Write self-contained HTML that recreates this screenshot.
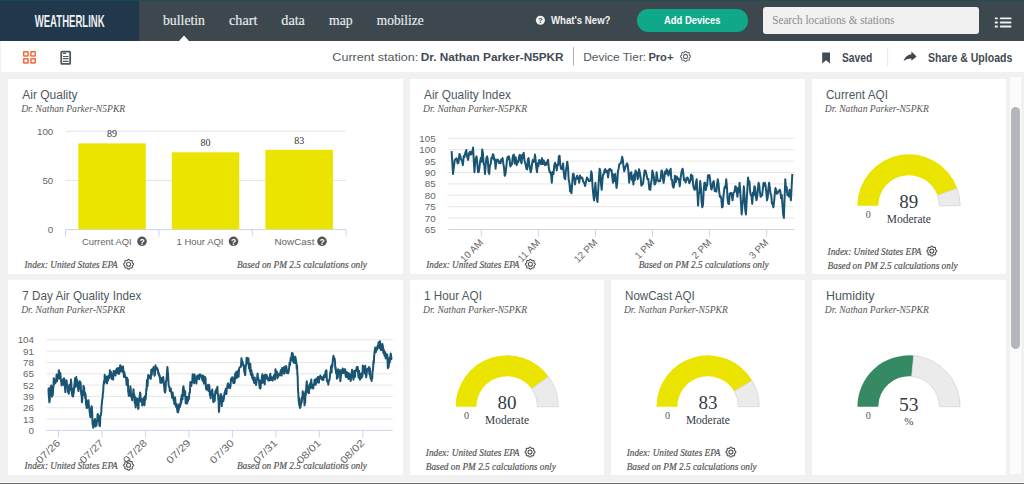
<!DOCTYPE html>
<html><head><meta charset="utf-8"><style>
html,body{margin:0;padding:0}
body{width:1024px;height:484px;overflow:hidden;background:#f1f1f1;position:relative;font-family:"Liberation Sans",sans-serif}
.abs{position:absolute}
.card{position:absolute;background:#fff}
svg{position:absolute;left:0;top:0}
</style></head><body>
<div class="abs" style="left:0;top:0;width:1024px;height:41px;background:#3d484e"></div>
<div class="abs" style="left:0;top:0;width:139px;height:41px;background:#21374b"></div>
<div class="abs" style="left:0;top:0;width:139px;height:1px;background:#134a56"></div>
<div class="abs" style="left:139px;top:0;width:885px;height:1px;background:#214e55"></div>
<div class="abs" style="left:637px;top:9px;width:110.5px;height:22.5px;border-radius:11.25px;background:#0fa889"></div>
<div class="abs" style="left:763px;top:7px;width:216px;height:27px;border-radius:3px;background:#f1f1f1"></div>
<div class="abs" style="left:1px;top:41px;width:1023px;height:31px;background:#fff"></div>
<div class="card" style="left:8.00px;top:79.0px;width:395.30px;height:195.0px"></div>
<div class="card" style="left:409.80px;top:79.0px;width:395.30px;height:195.0px"></div>
<div class="card" style="left:811.60px;top:79.0px;width:194.40px;height:195.0px"></div>
<div class="card" style="left:8.00px;top:280.0px;width:395.30px;height:195.0px"></div>
<div class="card" style="left:409.80px;top:280.0px;width:194.40px;height:195.0px"></div>
<div class="card" style="left:610.70px;top:280.0px;width:194.40px;height:195.0px"></div>
<div class="card" style="left:811.60px;top:280.0px;width:194.40px;height:195.0px"></div>
<div class="abs" style="left:1010px;top:77px;width:11px;height:397px;background:#fcfcfc"></div>
<div class="abs" style="left:1011px;top:107px;width:9px;height:242px;border-radius:4.5px;background:#b3b6bb"></div>
<div class="abs" style="left:0;top:482px;width:1024px;height:1px;background:#fafafa"></div>
<div class="abs" style="left:0;top:483px;width:1024px;height:1px;background:#6b6b6b"></div>
<svg width="1024" height="484" viewBox="0 0 1024 484">
<path d="M179 41L184 35.5L189 41Z" fill="#fff"/>
<g fill="none" stroke="#f26b3a" stroke-width="1.5"><rect x="23.7" y="51.7" width="4.4" height="4.4" rx="0.4"/><rect x="30.9" y="51.7" width="4.4" height="4.4" rx="0.4"/><rect x="23.7" y="58.7" width="4.4" height="4.4" rx="0.4"/><rect x="30.9" y="58.7" width="4.4" height="4.4" rx="0.4"/></g>
<rect x="61.25" y="51.65" width="8.9" height="12.3" rx="0.6" fill="none" stroke="#50575d" stroke-width="1.8"/>
<path d="M63 53.4h3M63 56.5h5.5M63 58.6h5.5M63 61.4h5.5" stroke="#50575d" stroke-width="1.1"/>
<path d="M573.5 47.2V65.3" stroke="#a9adb1" stroke-width="1"/>
<path d="M887.7 47.5V66" stroke="#e3e6e8" stroke-width="1"/>
<path d="M690.58,56.40 L690.50,56.73 L690.29,57.03 L690.00,57.30 L689.70,57.53 L689.45,57.74 L689.29,57.97 L689.24,58.24 L689.26,58.57 L689.32,58.95 L689.33,59.34 L689.27,59.70 L689.09,59.99 L688.80,60.17 L688.44,60.23 L688.05,60.22 L687.67,60.16 L687.34,60.14 L687.07,60.19 L686.84,60.35 L686.63,60.60 L686.40,60.90 L686.13,61.19 L685.83,61.40 L685.50,61.48 L685.17,61.40 L684.87,61.19 L684.60,60.90 L684.37,60.60 L684.16,60.35 L683.93,60.19 L683.66,60.14 L683.33,60.16 L682.95,60.22 L682.56,60.23 L682.20,60.17 L681.91,59.99 L681.73,59.70 L681.67,59.34 L681.68,58.95 L681.74,58.57 L681.76,58.24 L681.71,57.97 L681.55,57.74 L681.30,57.53 L681.00,57.30 L680.71,57.03 L680.50,56.73 L680.42,56.40 L680.50,56.07 L680.71,55.77 L681.00,55.50 L681.30,55.27 L681.55,55.06 L681.71,54.83 L681.76,54.56 L681.74,54.23 L681.68,53.85 L681.67,53.46 L681.73,53.10 L681.91,52.81 L682.20,52.63 L682.56,52.57 L682.95,52.58 L683.33,52.64 L683.66,52.66 L683.93,52.61 L684.16,52.45 L684.37,52.20 L684.60,51.90 L684.87,51.61 L685.17,51.40 L685.50,51.32 L685.83,51.40 L686.13,51.61 L686.40,51.90 L686.63,52.20 L686.84,52.45 L687.07,52.61 L687.34,52.66 L687.67,52.64 L688.05,52.58 L688.44,52.57 L688.80,52.63 L689.09,52.81 L689.27,53.10 L689.33,53.46 L689.32,53.85 L689.26,54.23 L689.24,54.56 L689.29,54.83 L689.45,55.06 L689.70,55.27 L690.00,55.50 L690.29,55.77 L690.50,56.07Z" fill="none" stroke="#62686e" stroke-width="1.05" stroke-linejoin="round"/><circle cx="685.5" cy="56.4" r="2.05" fill="none" stroke="#62686e" stroke-width="1.05"/>
<path d="M822.2 52.4H830V63.5L826.1 60.2L822.2 63.5Z" fill="#414b53"/>
<path d="M903.6 61.2C904.5 57.5 907.5 54.6 911.4 54.2V51.5L916.6 56.4L911.4 60.8V58.6C908 58.6 905.5 59.5 903.6 61.2Z" fill="#3e474f"/>
<g fill="#eef0f2"><rect x="994.8" y="17.45" width="3" height="1.9" rx="0.5"/><rect x="999.8" y="17.45" width="11.7" height="1.9" rx="0.9"/><rect x="994.8" y="21.50" width="3" height="1.9" rx="0.5"/><rect x="999.8" y="21.50" width="11.7" height="1.9" rx="0.9"/><rect x="994.8" y="25.55" width="3" height="1.9" rx="0.5"/><rect x="999.8" y="25.55" width="11.7" height="1.9" rx="0.9"/></g>
<path d="M65.5 131.3H346M65.5 180.45H346" stroke="#e6e6e6" stroke-width="1"/>
<path d="M65.5 229.6H346M65.5 229.6V236.6M158.9 229.6V236.6M252.3 229.6V236.6M346 229.6V236.6" stroke="#ccd6eb" stroke-width="1"/>
<rect x="78.3" y="143.4" width="67.5" height="85.9" fill="#ebe300"/>
<rect x="171.8" y="152.3" width="67.5" height="77.0" fill="#ebe300"/>
<rect x="265.4" y="149.8" width="67.5" height="79.5" fill="#ebe300"/>
<circle cx="142" cy="241.3" r="4.8" fill="#555"/>
<circle cx="233.5" cy="241.3" r="4.8" fill="#555"/>
<circle cx="322" cy="241.3" r="4.8" fill="#555"/>
<path d="M133.58,264.30 L133.51,264.62 L133.30,264.92 L133.02,265.18 L132.72,265.40 L132.47,265.62 L132.32,265.84 L132.27,266.11 L132.29,266.43 L132.35,266.80 L132.36,267.19 L132.30,267.54 L132.12,267.82 L131.84,268.00 L131.49,268.06 L131.10,268.05 L130.73,267.99 L130.41,267.97 L130.14,268.02 L129.92,268.17 L129.70,268.42 L129.48,268.72 L129.22,269.00 L128.92,269.21 L128.60,269.28 L128.28,269.21 L127.98,269.00 L127.72,268.72 L127.50,268.42 L127.28,268.17 L127.06,268.02 L126.79,267.97 L126.47,267.99 L126.10,268.05 L125.71,268.06 L125.36,268.00 L125.08,267.82 L124.90,267.54 L124.84,267.19 L124.85,266.80 L124.91,266.43 L124.93,266.11 L124.88,265.84 L124.73,265.62 L124.48,265.40 L124.18,265.18 L123.90,264.92 L123.69,264.62 L123.62,264.30 L123.69,263.98 L123.90,263.68 L124.18,263.42 L124.48,263.20 L124.73,262.98 L124.88,262.76 L124.93,262.49 L124.91,262.17 L124.85,261.80 L124.84,261.41 L124.90,261.06 L125.08,260.78 L125.36,260.60 L125.71,260.54 L126.10,260.55 L126.47,260.61 L126.79,260.63 L127.06,260.58 L127.28,260.43 L127.50,260.18 L127.72,259.88 L127.98,259.60 L128.28,259.39 L128.60,259.32 L128.92,259.39 L129.22,259.60 L129.48,259.88 L129.70,260.18 L129.92,260.43 L130.14,260.58 L130.41,260.63 L130.73,260.61 L131.10,260.55 L131.49,260.54 L131.84,260.60 L132.12,260.78 L132.30,261.06 L132.36,261.41 L132.35,261.80 L132.29,262.17 L132.27,262.49 L132.32,262.76 L132.47,262.98 L132.72,263.20 L133.02,263.42 L133.30,263.68 L133.51,263.98Z" fill="none" stroke="#555" stroke-width="1.1" stroke-linejoin="round"/><circle cx="128.6" cy="264.3" r="2.01" fill="none" stroke="#555" stroke-width="1.1"/>
<path d="M535.38,264.30 L535.31,264.62 L535.10,264.92 L534.82,265.18 L534.52,265.40 L534.27,265.62 L534.12,265.84 L534.07,266.11 L534.09,266.43 L534.15,266.80 L534.16,267.19 L534.10,267.54 L533.92,267.82 L533.64,268.00 L533.29,268.06 L532.90,268.05 L532.53,267.99 L532.21,267.97 L531.94,268.02 L531.72,268.17 L531.50,268.42 L531.28,268.72 L531.02,269.00 L530.72,269.21 L530.40,269.28 L530.08,269.21 L529.78,269.00 L529.52,268.72 L529.30,268.42 L529.08,268.17 L528.86,268.02 L528.59,267.97 L528.27,267.99 L527.90,268.05 L527.51,268.06 L527.16,268.00 L526.88,267.82 L526.70,267.54 L526.64,267.19 L526.65,266.80 L526.71,266.43 L526.73,266.11 L526.68,265.84 L526.53,265.62 L526.28,265.40 L525.98,265.18 L525.70,264.92 L525.49,264.62 L525.42,264.30 L525.49,263.98 L525.70,263.68 L525.98,263.42 L526.28,263.20 L526.53,262.98 L526.68,262.76 L526.73,262.49 L526.71,262.17 L526.65,261.80 L526.64,261.41 L526.70,261.06 L526.88,260.78 L527.16,260.60 L527.51,260.54 L527.90,260.55 L528.27,260.61 L528.59,260.63 L528.86,260.58 L529.08,260.43 L529.30,260.18 L529.52,259.88 L529.78,259.60 L530.08,259.39 L530.40,259.32 L530.72,259.39 L531.02,259.60 L531.28,259.88 L531.50,260.18 L531.72,260.43 L531.94,260.58 L532.21,260.63 L532.53,260.61 L532.90,260.55 L533.29,260.54 L533.64,260.60 L533.92,260.78 L534.10,261.06 L534.16,261.41 L534.15,261.80 L534.09,262.17 L534.07,262.49 L534.12,262.76 L534.27,262.98 L534.52,263.20 L534.82,263.42 L535.10,263.68 L535.31,263.98Z" fill="none" stroke="#555" stroke-width="1.1" stroke-linejoin="round"/><circle cx="530.4" cy="264.3" r="2.01" fill="none" stroke="#555" stroke-width="1.1"/>
<path d="M133.58,465.30 L133.51,465.62 L133.30,465.92 L133.02,466.18 L132.72,466.40 L132.47,466.62 L132.32,466.84 L132.27,467.11 L132.29,467.43 L132.35,467.80 L132.36,468.19 L132.30,468.54 L132.12,468.82 L131.84,469.00 L131.49,469.06 L131.10,469.05 L130.73,468.99 L130.41,468.97 L130.14,469.02 L129.92,469.17 L129.70,469.42 L129.48,469.72 L129.22,470.00 L128.92,470.21 L128.60,470.28 L128.28,470.21 L127.98,470.00 L127.72,469.72 L127.50,469.42 L127.28,469.17 L127.06,469.02 L126.79,468.97 L126.47,468.99 L126.10,469.05 L125.71,469.06 L125.36,469.00 L125.08,468.82 L124.90,468.54 L124.84,468.19 L124.85,467.80 L124.91,467.43 L124.93,467.11 L124.88,466.84 L124.73,466.62 L124.48,466.40 L124.18,466.18 L123.90,465.92 L123.69,465.62 L123.62,465.30 L123.69,464.98 L123.90,464.68 L124.18,464.42 L124.48,464.20 L124.73,463.98 L124.88,463.76 L124.93,463.49 L124.91,463.17 L124.85,462.80 L124.84,462.41 L124.90,462.06 L125.08,461.78 L125.36,461.60 L125.71,461.54 L126.10,461.55 L126.47,461.61 L126.79,461.63 L127.06,461.58 L127.28,461.43 L127.50,461.18 L127.72,460.88 L127.98,460.60 L128.28,460.39 L128.60,460.32 L128.92,460.39 L129.22,460.60 L129.48,460.88 L129.70,461.18 L129.92,461.43 L130.14,461.58 L130.41,461.63 L130.73,461.61 L131.10,461.55 L131.49,461.54 L131.84,461.60 L132.12,461.78 L132.30,462.06 L132.36,462.41 L132.35,462.80 L132.29,463.17 L132.27,463.49 L132.32,463.76 L132.47,463.98 L132.72,464.20 L133.02,464.42 L133.30,464.68 L133.51,464.98Z" fill="none" stroke="#555" stroke-width="1.1" stroke-linejoin="round"/><circle cx="128.6" cy="465.3" r="2.01" fill="none" stroke="#555" stroke-width="1.1"/>
<path d="M936.78,251.10 L936.71,251.42 L936.50,251.72 L936.22,251.98 L935.92,252.20 L935.67,252.42 L935.52,252.64 L935.47,252.91 L935.49,253.23 L935.55,253.60 L935.56,253.99 L935.50,254.34 L935.32,254.62 L935.04,254.80 L934.69,254.86 L934.30,254.85 L933.93,254.79 L933.61,254.77 L933.34,254.82 L933.12,254.97 L932.90,255.22 L932.68,255.52 L932.42,255.80 L932.12,256.01 L931.80,256.08 L931.48,256.01 L931.18,255.80 L930.92,255.52 L930.70,255.22 L930.48,254.97 L930.26,254.82 L929.99,254.77 L929.67,254.79 L929.30,254.85 L928.91,254.86 L928.56,254.80 L928.28,254.62 L928.10,254.34 L928.04,253.99 L928.05,253.60 L928.11,253.23 L928.13,252.91 L928.08,252.64 L927.93,252.42 L927.68,252.20 L927.38,251.98 L927.10,251.72 L926.89,251.42 L926.82,251.10 L926.89,250.78 L927.10,250.48 L927.38,250.22 L927.68,250.00 L927.93,249.78 L928.08,249.56 L928.13,249.29 L928.11,248.97 L928.05,248.60 L928.04,248.21 L928.10,247.86 L928.28,247.58 L928.56,247.40 L928.91,247.34 L929.30,247.35 L929.67,247.41 L929.99,247.43 L930.26,247.38 L930.48,247.23 L930.70,246.98 L930.92,246.68 L931.18,246.40 L931.48,246.19 L931.80,246.12 L932.12,246.19 L932.42,246.40 L932.68,246.68 L932.90,246.98 L933.12,247.23 L933.34,247.38 L933.61,247.43 L933.93,247.41 L934.30,247.35 L934.69,247.34 L935.04,247.40 L935.32,247.58 L935.50,247.86 L935.56,248.21 L935.55,248.60 L935.49,248.97 L935.47,249.29 L935.52,249.56 L935.67,249.78 L935.92,250.00 L936.22,250.22 L936.50,250.48 L936.71,250.78Z" fill="none" stroke="#555" stroke-width="1.1" stroke-linejoin="round"/><circle cx="931.8000000000001" cy="251.1" r="2.01" fill="none" stroke="#555" stroke-width="1.1"/>
<path d="M534.98,452.10 L534.91,452.42 L534.70,452.72 L534.42,452.98 L534.12,453.20 L533.87,453.42 L533.72,453.64 L533.67,453.91 L533.69,454.23 L533.75,454.60 L533.76,454.99 L533.70,455.34 L533.52,455.62 L533.24,455.80 L532.89,455.86 L532.50,455.85 L532.13,455.79 L531.81,455.77 L531.54,455.82 L531.32,455.97 L531.10,456.22 L530.88,456.52 L530.62,456.80 L530.32,457.01 L530.00,457.08 L529.68,457.01 L529.38,456.80 L529.12,456.52 L528.90,456.22 L528.68,455.97 L528.46,455.82 L528.19,455.77 L527.87,455.79 L527.50,455.85 L527.11,455.86 L526.76,455.80 L526.48,455.62 L526.30,455.34 L526.24,454.99 L526.25,454.60 L526.31,454.23 L526.33,453.91 L526.28,453.64 L526.13,453.42 L525.88,453.20 L525.58,452.98 L525.30,452.72 L525.09,452.42 L525.02,452.10 L525.09,451.78 L525.30,451.48 L525.58,451.22 L525.88,451.00 L526.13,450.78 L526.28,450.56 L526.33,450.29 L526.31,449.97 L526.25,449.60 L526.24,449.21 L526.30,448.86 L526.48,448.58 L526.76,448.40 L527.11,448.34 L527.50,448.35 L527.87,448.41 L528.19,448.43 L528.46,448.38 L528.68,448.23 L528.90,447.98 L529.12,447.68 L529.38,447.40 L529.68,447.19 L530.00,447.12 L530.32,447.19 L530.62,447.40 L530.88,447.68 L531.10,447.98 L531.32,448.23 L531.54,448.38 L531.81,448.43 L532.13,448.41 L532.50,448.35 L532.89,448.34 L533.24,448.40 L533.52,448.58 L533.70,448.86 L533.76,449.21 L533.75,449.60 L533.69,449.97 L533.67,450.29 L533.72,450.56 L533.87,450.78 L534.12,451.00 L534.42,451.22 L534.70,451.48 L534.91,451.78Z" fill="none" stroke="#555" stroke-width="1.1" stroke-linejoin="round"/><circle cx="530.0" cy="452.1" r="2.01" fill="none" stroke="#555" stroke-width="1.1"/>
<path d="M735.88,452.10 L735.81,452.42 L735.60,452.72 L735.32,452.98 L735.02,453.20 L734.77,453.42 L734.62,453.64 L734.57,453.91 L734.59,454.23 L734.65,454.60 L734.66,454.99 L734.60,455.34 L734.42,455.62 L734.14,455.80 L733.79,455.86 L733.40,455.85 L733.03,455.79 L732.71,455.77 L732.44,455.82 L732.22,455.97 L732.00,456.22 L731.78,456.52 L731.52,456.80 L731.22,457.01 L730.90,457.08 L730.58,457.01 L730.28,456.80 L730.02,456.52 L729.80,456.22 L729.58,455.97 L729.36,455.82 L729.09,455.77 L728.77,455.79 L728.40,455.85 L728.01,455.86 L727.66,455.80 L727.38,455.62 L727.20,455.34 L727.14,454.99 L727.15,454.60 L727.21,454.23 L727.23,453.91 L727.18,453.64 L727.03,453.42 L726.78,453.20 L726.48,452.98 L726.20,452.72 L725.99,452.42 L725.92,452.10 L725.99,451.78 L726.20,451.48 L726.48,451.22 L726.78,451.00 L727.03,450.78 L727.18,450.56 L727.23,450.29 L727.21,449.97 L727.15,449.60 L727.14,449.21 L727.20,448.86 L727.38,448.58 L727.66,448.40 L728.01,448.34 L728.40,448.35 L728.77,448.41 L729.09,448.43 L729.36,448.38 L729.58,448.23 L729.80,447.98 L730.02,447.68 L730.28,447.40 L730.58,447.19 L730.90,447.12 L731.22,447.19 L731.52,447.40 L731.78,447.68 L732.00,447.98 L732.22,448.23 L732.44,448.38 L732.71,448.43 L733.03,448.41 L733.40,448.35 L733.79,448.34 L734.14,448.40 L734.42,448.58 L734.60,448.86 L734.66,449.21 L734.65,449.60 L734.59,449.97 L734.57,450.29 L734.62,450.56 L734.77,450.78 L735.02,451.00 L735.32,451.22 L735.60,451.48 L735.81,451.78Z" fill="none" stroke="#555" stroke-width="1.1" stroke-linejoin="round"/><circle cx="730.9000000000001" cy="452.1" r="2.01" fill="none" stroke="#555" stroke-width="1.1"/>
<path d="M448.2 138.30H794.5" stroke="#e6e6e6" stroke-width="1"/>
<path d="M448.2 149.70H794.5" stroke="#e6e6e6" stroke-width="1"/>
<path d="M448.2 161.10H794.5" stroke="#e6e6e6" stroke-width="1"/>
<path d="M448.2 172.50H794.5" stroke="#e6e6e6" stroke-width="1"/>
<path d="M448.2 183.90H794.5" stroke="#e6e6e6" stroke-width="1"/>
<path d="M448.2 195.30H794.5" stroke="#e6e6e6" stroke-width="1"/>
<path d="M448.2 206.70H794.5" stroke="#e6e6e6" stroke-width="1"/>
<path d="M448.2 218.10H794.5" stroke="#e6e6e6" stroke-width="1"/>
<path d="M448.2 229.5H794.5" stroke="#ccd6eb" stroke-width="1"/>
<path d="M481.30 229.5V236.6" stroke="#ccd6eb" stroke-width="1"/>
<path d="M538.36 229.5V236.6" stroke="#ccd6eb" stroke-width="1"/>
<path d="M595.42 229.5V236.6" stroke="#ccd6eb" stroke-width="1"/>
<path d="M652.48 229.5V236.6" stroke="#ccd6eb" stroke-width="1"/>
<path d="M709.54 229.5V236.6" stroke="#ccd6eb" stroke-width="1"/>
<path d="M766.60 229.5V236.6" stroke="#ccd6eb" stroke-width="1"/>
<path d="M451.60,151.10 L453.01,173.95 L454.77,159.89 L455.71,159.08 L456.64,158.30 L457.58,163.40 L458.52,162.76 L459.46,153.90 L460.39,156.37 L461.21,159.71 L462.03,160.72 L462.86,165.16 L463.68,156.09 L464.50,157.04 L465.32,152.86 L466.25,150.00 L467.19,156.80 L468.13,159.89 L469.07,153.29 L470.00,151.77 L470.94,154.61 L471.65,151.42 L472.35,153.60 L473.05,147.58 L474.46,172.19 L475.16,162.69 L475.86,158.53 L476.57,156.37 L477.27,163.08 L477.97,171.96 L478.68,172.19 L479.38,168.37 L480.08,161.66 L480.79,158.13 L481.49,161.73 L482.19,149.51 L482.90,152.86 L483.60,163.92 L484.30,164.55 L485.01,173.95 L485.71,164.09 L486.41,157.93 L487.12,156.37 L487.82,160.08 L488.52,171.65 L489.23,173.95 L489.93,165.09 L490.63,164.32 L491.34,158.13 L492.04,158.52 L492.74,154.35 L493.45,154.61 L494.15,159.84 L494.85,159.07 L495.56,168.68 L496.38,160.79 L497.20,159.51 L498.02,159.89 L498.84,163.09 L499.66,161.42 L500.48,163.40 L501.18,159.55 L501.88,160.85 L502.59,158.13 L503.29,163.46 L503.99,167.60 L504.70,175.71 L505.40,174.33 L506.10,168.57 L506.81,161.65 L507.51,157.01 L508.21,158.97 L508.92,156.37 L509.62,159.58 L510.32,166.45 L511.03,165.16 L511.96,164.23 L512.90,155.74 L513.84,154.61 L514.78,163.53 L515.71,157.35 L516.65,165.16 L517.47,161.31 L518.29,162.19 L519.11,156.37 L519.93,154.80 L520.75,160.94 L521.58,163.40 L522.28,154.70 L522.98,158.26 L523.68,152.86 L524.62,161.11 L525.56,164.23 L526.50,168.68 L527.20,169.39 L527.90,159.55 L528.61,158.13 L529.31,165.02 L530.01,168.57 L530.72,172.19 L531.42,168.99 L532.12,163.50 L532.83,159.89 L533.53,161.95 L534.23,161.37 L534.94,154.61 L535.64,160.18 L536.34,168.18 L537.05,172.19 L537.75,163.15 L538.45,166.26 L539.16,159.89 L540.09,160.96 L541.03,164.26 L541.97,158.13 L542.91,164.10 L543.84,160.39 L544.78,165.16 L545.60,162.70 L546.42,164.72 L547.24,161.65 L548.06,159.79 L548.88,168.25 L549.70,172.19 L550.41,171.98 L551.11,174.92 L551.81,182.74 L552.63,171.92 L553.46,174.04 L554.28,165.16 L555.10,162.75 L555.92,165.84 L556.74,170.44 L557.44,164.52 L558.14,165.24 L558.85,156.37 L559.55,155.75 L560.25,164.00 L560.96,168.68 L561.66,167.48 L562.36,169.48 L563.07,163.40 L563.77,172.27 L564.47,178.05 L565.18,179.23 L565.88,170.87 L566.58,166.55 L567.29,161.65 L567.99,167.09 L568.69,180.03 L569.40,182.74 L570.10,191.41 L570.80,185.85 L571.50,193.29 L572.91,173.95 L573.61,173.83 L574.32,177.97 L575.02,184.50 L575.72,178.57 L576.43,178.47 L577.13,175.71 L577.83,179.06 L578.54,177.73 L579.24,182.74 L579.94,175.40 L580.65,178.31 L581.35,177.47 L582.29,177.76 L583.23,181.73 L584.16,182.74 L585.10,186.08 L586.04,181.37 L586.98,177.47 L587.91,178.81 L588.85,181.14 L589.79,180.98 L590.49,180.62 L591.20,171.28 L591.90,173.95 L592.60,187.24 L593.31,194.68 L594.01,200.32 L595.41,182.74 L596.12,193.40 L596.82,198.99 L597.52,202.08 L598.23,189.74 L598.93,178.68 L599.63,168.68 L600.34,171.25 L601.04,184.25 L601.74,189.77 L602.45,179.58 L603.15,174.36 L603.85,173.95 L604.56,170.09 L605.26,168.98 L605.96,172.19 L606.67,172.15 L607.37,170.68 L608.07,177.47 L609.01,169.50 L609.95,168.86 L610.89,170.44 L611.59,170.05 L612.29,177.11 L613.00,182.74 L613.70,174.47 L614.40,181.09 L615.11,173.95 L616.51,188.02 L617.22,182.85 L617.92,171.17 L618.62,168.68 L619.32,164.13 L620.03,163.44 L620.73,163.40 L621.43,160.70 L622.14,156.82 L622.84,159.89 L623.54,166.74 L624.25,171.30 L624.95,168.68 L625.65,166.54 L626.36,164.98 L627.06,163.40 L627.76,165.19 L628.47,171.82 L629.17,182.74 L629.87,177.46 L630.58,173.06 L631.28,172.19 L631.98,180.00 L632.69,176.59 L633.39,184.50 L634.09,174.45 L634.80,180.20 L635.50,170.44 L636.20,173.68 L636.91,172.32 L637.61,179.23 L638.31,177.37 L639.02,169.22 L639.72,172.19 L640.54,176.61 L641.36,185.78 L642.18,184.50 L643.00,183.90 L643.82,177.33 L644.64,170.44 L645.58,170.68 L646.52,174.80 L647.45,179.23 L648.39,179.00 L649.33,189.32 L650.27,189.77 L650.97,183.70 L651.67,180.02 L652.38,170.44 L653.08,173.21 L653.78,176.70 L654.49,184.50 L655.19,183.90 L655.89,181.75 L656.60,172.19 L657.53,179.09 L658.47,181.50 L659.41,180.98 L660.11,181.05 L660.82,176.65 L661.52,170.44 L662.22,171.46 L662.93,178.84 L663.63,182.74 L664.33,178.19 L665.04,171.58 L665.74,173.95 L666.68,169.23 L667.61,172.64 L668.55,175.71 L669.25,170.66 L669.96,173.19 L670.66,168.68 L671.36,179.67 L672.07,179.80 L672.77,186.26 L673.47,187.66 L674.18,184.72 L674.88,175.71 L675.82,182.00 L676.76,176.53 L677.69,179.23 L678.40,178.43 L679.10,180.84 L679.80,186.26 L680.74,176.99 L681.68,171.21 L682.62,168.68 L683.32,173.59 L684.02,180.21 L684.73,179.23 L685.66,182.47 L686.60,177.82 L687.54,177.47 L688.48,180.36 L689.41,183.18 L690.35,180.98 L691.05,174.55 L691.76,179.28 L692.46,175.71 L693.16,185.01 L693.87,188.26 L694.57,189.77 L695.27,189.07 L695.98,182.50 L696.68,179.23 L698.09,205.60 L698.79,193.78 L699.49,192.44 L700.20,180.98 L700.90,187.89 L701.60,201.95 L702.31,207.36 L703.01,204.46 L703.71,189.78 L704.42,182.74 L705.12,182.81 L705.82,190.11 L706.53,186.26 L707.23,185.27 L707.93,175.51 L708.64,175.71 L709.34,175.03 L710.04,178.82 L710.75,186.26 L711.45,189.64 L712.15,187.36 L712.86,182.74 L713.79,181.11 L714.73,191.10 L715.67,189.77 L716.37,191.66 L717.07,184.51 L717.78,179.23 L718.48,183.40 L719.18,191.49 L719.89,196.81 L720.59,196.17 L721.29,198.37 L722.00,207.36 L722.70,206.79 L723.40,197.32 L724.11,189.77 L724.81,186.56 L725.51,187.62 L726.22,179.23 L726.92,186.69 L727.62,199.82 L728.33,203.84 L729.03,203.99 L729.73,193.56 L730.44,193.29 L731.14,192.84 L731.84,195.65 L732.55,200.32 L733.48,192.72 L734.42,191.92 L735.36,186.26 L736.06,187.07 L736.77,192.38 L737.47,196.81 L738.17,187.97 L738.87,192.04 L739.58,182.74 L740.28,191.65 L740.98,203.37 L741.69,214.39 L742.39,205.95 L743.09,200.18 L743.80,186.26 L744.50,194.74 L745.20,209.71 L745.91,214.39 L746.61,202.10 L747.31,190.13 L748.02,177.47 L748.72,182.42 L749.42,181.43 L750.13,191.53 L750.83,194.96 L751.53,196.17 L752.24,203.84 L752.94,192.40 L753.64,195.49 L754.35,186.26 L755.05,187.26 L755.75,195.34 L756.46,200.32 L757.16,197.00 L757.86,189.24 L758.57,182.74 L759.27,185.47 L759.97,192.33 L760.68,196.81 L761.38,195.09 L762.08,195.32 L762.78,189.77 L763.49,183.00 L764.19,185.77 L764.89,182.74 L765.60,185.77 L766.30,191.95 L767.00,200.32 L767.71,197.53 L768.41,188.69 L769.11,182.74 L769.82,187.54 L770.52,193.87 L771.22,195.05 L771.93,203.79 L772.63,202.62 L773.33,207.36 L774.04,202.18 L774.74,194.53 L775.44,188.02 L776.15,189.91 L776.85,193.70 L777.55,193.29 L778.26,191.58 L778.96,191.32 L779.66,189.77 L780.37,191.29 L781.07,198.26 L781.77,195.05 L782.48,204.91 L783.18,214.52 L783.88,217.90 L785.29,179.23 L785.99,189.48 L786.69,187.07 L787.40,195.05 L788.10,193.96 L788.80,196.52 L789.51,189.77 L790.91,200.32 L792.32,173.95" fill="none" stroke="#1a5473" stroke-width="2" stroke-linejoin="round"/>
<path d="M46.3 339.80H392.8" stroke="#e6e6e6" stroke-width="1"/>
<path d="M46.3 351.12H392.8" stroke="#e6e6e6" stroke-width="1"/>
<path d="M46.3 362.45H392.8" stroke="#e6e6e6" stroke-width="1"/>
<path d="M46.3 373.77H392.8" stroke="#e6e6e6" stroke-width="1"/>
<path d="M46.3 385.10H392.8" stroke="#e6e6e6" stroke-width="1"/>
<path d="M46.3 396.43H392.8" stroke="#e6e6e6" stroke-width="1"/>
<path d="M46.3 407.75H392.8" stroke="#e6e6e6" stroke-width="1"/>
<path d="M46.3 419.07H392.8" stroke="#e6e6e6" stroke-width="1"/>
<path d="M46.3 430.4H392.8" stroke="#ccd6eb" stroke-width="1"/>
<path d="M58.50 430.4V437.6" stroke="#ccd6eb" stroke-width="1"/>
<path d="M101.97 430.4V437.6" stroke="#ccd6eb" stroke-width="1"/>
<path d="M145.44 430.4V437.6" stroke="#ccd6eb" stroke-width="1"/>
<path d="M188.91 430.4V437.6" stroke="#ccd6eb" stroke-width="1"/>
<path d="M232.38 430.4V437.6" stroke="#ccd6eb" stroke-width="1"/>
<path d="M275.85 430.4V437.6" stroke="#ccd6eb" stroke-width="1"/>
<path d="M319.32 430.4V437.6" stroke="#ccd6eb" stroke-width="1"/>
<path d="M362.79 430.4V437.6" stroke="#ccd6eb" stroke-width="1"/>
<path d="M48.23,388.59 L48.47,388.46 L48.70,394.55 L48.94,395.37 L49.17,400.67 L49.41,402.27 L49.72,400.52 L50.03,391.26 L50.34,387.57 L50.66,393.46 L50.97,386.64 L51.28,385.57 L51.59,386.86 L51.91,396.75 L52.22,392.57 L52.53,394.45 L52.84,395.01 L53.16,387.94 L53.47,386.60 L53.78,378.13 L54.09,378.83 L54.41,380.69 L54.72,383.63 L55.03,380.25 L55.34,383.03 L55.66,380.78 L56.12,381.87 L56.59,374.45 L57.06,381.26 L57.53,378.65 L58.00,376.88 L58.47,373.92 L58.94,370.18 L59.41,378.53 L59.88,373.45 L60.34,372.97 L60.66,377.32 L60.97,381.02 L61.28,381.17 L61.59,385.39 L61.91,382.73 L62.22,380.80 L62.53,384.46 L62.84,379.78 L63.16,384.37 L63.47,378.83 L63.78,384.93 L64.09,378.33 L64.41,380.71 L64.72,383.55 L65.03,388.59 L65.34,392.12 L65.66,384.77 L65.97,385.29 L66.28,380.17 L66.59,380.78 L66.91,383.20 L67.22,384.22 L67.53,386.18 L67.84,391.09 L68.16,392.50 L68.47,391.86 L68.78,393.80 L69.09,389.80 L69.41,390.94 L69.72,384.69 L70.03,388.20 L70.34,389.28 L70.66,385.39 L70.97,379.44 L71.28,382.73 L71.59,389.41 L71.91,393.29 L72.22,395.36 L72.53,394.43 L72.84,396.41 L73.16,396.40 L73.47,388.56 L73.78,393.00 L74.09,387.84 L74.41,384.69 L74.72,381.55 L75.03,378.35 L75.34,386.21 L75.66,386.92 L75.97,380.78 L76.28,377.06 L76.59,385.63 L76.91,382.15 L77.22,380.09 L77.53,384.69 L77.84,383.21 L78.16,389.19 L78.47,391.11 L78.78,382.83 L79.09,388.59 L79.41,388.67 L79.72,381.27 L80.03,387.47 L80.34,382.06 L80.66,382.73 L80.97,390.42 L81.28,395.02 L81.59,393.34 L81.91,402.25 L82.22,400.31 L82.53,395.89 L82.84,391.00 L83.16,394.37 L83.47,385.81 L83.78,388.59 L84.09,387.24 L84.41,391.49 L84.72,395.66 L85.03,392.65 L85.34,398.36 L85.66,394.53 L85.97,404.73 L86.28,399.84 L86.59,408.06 L86.91,404.22 L87.22,407.78 L87.53,401.32 L87.84,401.44 L88.16,401.31 L88.47,400.31 L88.78,404.62 L89.09,406.83 L89.41,409.16 L89.72,412.56 L90.03,413.98 L90.34,417.24 L90.66,410.94 L90.97,408.54 L91.28,410.14 L91.59,406.17 L91.91,407.60 L92.22,412.59 L92.53,424.29 L92.84,423.59 L93.16,427.66 L93.47,427.40 L93.78,420.75 L94.09,424.39 L94.41,425.41 L94.72,423.75 L95.03,418.89 L95.34,425.80 L95.66,426.37 L95.97,420.50 L96.28,425.70 L96.59,424.75 L96.91,420.65 L97.22,420.63 L97.53,414.72 L97.84,413.98 L98.16,418.59 L98.47,421.28 L98.78,415.79 L99.09,418.55 L99.41,425.70 L99.72,425.28 L100.03,426.08 L100.34,415.95 L100.66,415.85 L100.97,413.98 L101.28,411.87 L101.59,405.77 L101.91,403.12 L102.22,399.44 L102.53,398.36 L102.84,393.41 L103.16,392.37 L103.47,385.63 L103.78,382.95 L104.09,380.78 L104.41,383.37 L104.72,374.83 L105.03,380.37 L105.34,381.79 L105.66,378.83 L106.12,377.14 L106.59,376.57 L107.06,383.32 L107.53,377.53 L108.00,380.78 L108.47,375.80 L108.94,376.95 L109.41,378.26 L109.88,370.18 L110.34,372.97 L110.81,371.80 L111.28,372.71 L111.75,378.96 L112.22,375.42 L112.69,376.88 L113.16,379.59 L113.62,370.91 L114.09,371.57 L114.56,373.83 L115.03,371.02 L115.50,375.62 L115.97,371.26 L116.44,369.18 L116.91,368.43 L117.38,372.97 L117.84,372.51 L118.31,368.02 L118.78,373.98 L119.25,373.55 L119.72,369.06 L120.19,365.21 L120.66,365.86 L121.12,371.25 L121.59,369.05 L122.06,367.11 L122.38,371.63 L122.69,367.76 L123.00,366.57 L123.31,369.52 L123.62,372.97 L123.94,376.96 L124.25,372.03 L124.56,373.63 L124.88,375.18 L125.19,376.88 L125.66,377.17 L126.12,378.23 L126.59,384.99 L127.06,377.80 L127.53,382.73 L127.84,379.27 L128.16,391.49 L128.47,392.75 L128.78,395.87 L129.09,392.50 L129.41,391.00 L129.72,395.86 L130.03,394.83 L130.34,386.34 L130.66,388.59 L130.97,393.62 L131.28,396.96 L131.59,397.41 L131.91,398.18 L132.22,400.31 L132.53,396.44 L132.84,395.45 L133.16,392.64 L133.47,389.34 L133.78,392.50 L134.09,395.81 L134.41,394.86 L134.72,402.92 L135.03,396.90 L135.34,404.22 L135.66,407.46 L135.97,403.99 L136.28,405.34 L136.59,403.87 L136.91,398.36 L137.22,404.68 L137.53,403.11 L137.84,398.89 L138.16,408.85 L138.47,408.12 L138.78,401.41 L139.09,399.69 L139.41,400.53 L139.72,395.90 L140.03,392.50 L140.34,393.51 L140.66,401.21 L140.97,399.59 L141.28,398.58 L141.59,402.27 L141.91,399.17 L142.22,405.44 L142.53,400.84 L142.84,403.79 L143.16,400.31 L143.47,399.08 L143.78,397.78 L144.09,401.86 L144.41,405.34 L144.72,402.27 L145.03,395.94 L145.34,399.99 L145.66,398.68 L145.97,394.68 L146.28,388.59 L146.59,390.57 L146.91,380.08 L147.22,385.31 L147.53,386.31 L147.84,380.78 L148.16,375.08 L148.47,376.72 L148.78,375.91 L149.09,377.95 L149.41,376.88 L149.88,375.64 L150.34,375.80 L150.81,378.73 L151.28,369.86 L151.75,374.92 L152.22,369.27 L152.69,369.28 L153.16,368.47 L153.62,367.08 L154.09,371.02 L154.56,375.82 L155.03,374.11 L155.50,365.32 L155.97,369.48 L156.44,369.06 L156.91,367.83 L157.38,368.60 L157.84,369.78 L158.31,373.79 L158.78,372.97 L159.09,375.87 L159.41,375.35 L159.72,375.45 L160.03,378.91 L160.34,382.73 L160.81,377.84 L161.28,381.78 L161.75,382.75 L162.22,378.30 L162.69,378.83 L163.16,376.97 L163.62,380.78 L164.09,385.65 L164.56,390.91 L165.03,392.50 L165.50,390.51 L165.97,381.03 L166.44,380.56 L166.91,373.53 L167.38,367.11 L167.69,370.27 L168.00,373.53 L168.31,378.79 L168.62,384.95 L168.94,386.64 L169.41,386.94 L169.88,391.11 L170.34,389.73 L170.81,388.54 L171.28,392.50 L171.75,394.45 L172.22,397.76 L172.69,392.50 L173.16,397.93 L173.62,400.31 L173.94,399.11 L174.25,403.68 L174.56,403.91 L174.88,397.37 L175.19,398.36 L175.66,405.45 L176.12,407.01 L176.59,403.96 L177.06,408.90 L177.53,412.03 L177.84,406.35 L178.16,412.33 L178.47,409.12 L178.78,410.02 L179.09,404.22 L179.41,407.42 L179.72,406.05 L180.03,406.78 L180.34,404.92 L180.66,404.22 L180.97,398.71 L181.28,402.83 L181.59,395.29 L181.91,395.63 L182.22,398.36 L182.53,399.41 L182.84,389.47 L183.16,388.04 L183.47,386.16 L183.78,388.59 L184.25,395.49 L184.72,390.55 L185.19,391.59 L185.66,403.27 L186.12,402.27 L186.59,396.95 L187.06,403.68 L187.53,400.65 L188.00,401.26 L188.47,396.41 L188.94,399.01 L189.41,392.58 L189.88,392.64 L190.34,381.96 L190.81,384.69 L191.28,386.05 L191.75,381.69 L192.22,382.35 L192.69,374.14 L193.16,376.88 L193.62,380.38 L194.09,383.19 L194.56,374.42 L195.03,378.08 L195.50,380.78 L195.97,381.09 L196.44,383.59 L196.91,376.79 L197.38,375.72 L197.84,378.83 L198.31,375.31 L198.78,378.53 L199.25,379.26 L199.72,374.54 L200.19,374.92 L200.66,374.64 L201.12,376.14 L201.59,376.80 L202.06,378.71 L202.53,380.78 L203.00,375.44 L203.47,379.22 L203.94,383.61 L204.41,376.70 L204.88,376.88 L205.19,381.92 L205.50,377.85 L205.81,385.99 L206.12,389.05 L206.44,388.59 L206.75,389.71 L207.06,387.22 L207.38,386.07 L207.69,387.03 L208.00,384.69 L208.47,390.99 L208.94,384.76 L209.41,386.13 L209.87,395.21 L210.34,394.45 L210.66,398.23 L210.97,393.08 L211.28,391.49 L211.59,393.72 L211.91,390.55 L212.22,389.46 L212.53,392.69 L212.84,394.29 L213.16,400.86 L213.47,402.27 L213.78,398.68 L214.09,396.21 L214.41,399.67 L214.72,400.97 L215.03,394.45 L215.50,390.66 L215.97,393.57 L216.44,388.82 L216.91,392.07 L217.38,386.64 L217.69,392.64 L218.00,394.25 L218.31,398.79 L218.62,401.74 L218.94,412.03 L219.25,408.29 L219.56,403.72 L219.88,397.90 L220.19,396.44 L220.50,394.45 L220.81,394.07 L221.12,400.58 L221.44,395.24 L221.75,406.08 L222.06,402.27 L222.37,400.87 L222.69,401.00 L223.00,398.40 L223.31,401.24 L223.62,396.41 L223.94,398.75 L224.25,394.69 L224.56,392.69 L224.88,394.13 L225.19,390.55 L225.50,394.06 L225.81,388.67 L226.12,391.93 L226.44,394.02 L226.75,388.59 L227.22,387.46 L227.69,384.07 L228.16,383.35 L228.62,387.85 L229.09,384.69 L229.56,385.82 L230.03,388.14 L230.50,386.21 L230.97,378.74 L231.44,380.78 L231.91,377.39 L232.38,378.14 L232.84,377.36 L233.31,383.02 L233.78,380.78 L234.25,383.14 L234.72,382.03 L235.19,373.41 L235.66,378.52 L236.12,372.97 L236.44,371.71 L236.75,373.69 L237.06,377.82 L237.38,371.56 L237.69,376.88 L238.16,370.47 L238.62,376.62 L239.09,368.74 L239.56,367.49 L240.03,367.11 L240.50,366.82 L240.97,366.69 L241.44,358.20 L241.91,360.62 L242.38,361.25 L242.84,362.90 L243.31,365.78 L243.78,365.11 L244.25,371.56 L244.72,372.97 L245.19,375.21 L245.66,366.31 L246.12,365.25 L246.59,357.87 L247.06,359.30 L247.53,358.01 L248.00,363.45 L248.47,358.57 L248.94,368.22 L249.41,365.16 L249.88,371.19 L250.34,363.87 L250.81,374.67 L251.28,370.03 L251.75,372.97 L252.06,377.12 L252.38,378.13 L252.69,374.25 L253.00,379.58 L253.31,378.83 L253.78,380.90 L254.25,382.96 L254.72,377.44 L255.19,383.17 L255.66,380.78 L256.12,385.05 L256.59,381.11 L257.06,378.83 L257.53,373.43 L258.00,376.88 L258.47,379.15 L258.94,379.95 L259.41,386.29 L259.88,388.20 L260.34,388.59 L260.66,386.98 L260.97,380.43 L261.28,383.16 L261.59,380.65 L261.91,376.88 L262.38,374.15 L262.84,382.70 L263.31,380.92 L263.78,375.88 L264.25,380.78 L264.72,384.33 L265.19,374.52 L265.66,375.42 L266.12,378.51 L266.59,374.92 L267.06,377.16 L267.53,377.87 L268.00,380.05 L268.47,379.15 L268.94,380.78 L269.41,377.95 L269.88,375.68 L270.34,373.72 L270.81,380.02 L271.28,376.88 L271.75,380.05 L272.22,378.13 L272.69,380.67 L273.16,376.90 L273.62,378.83 L274.09,375.10 L274.56,375.21 L275.03,379.39 L275.50,369.13 L275.97,372.97 L276.44,373.80 L276.91,371.77 L277.38,378.25 L277.84,374.50 L278.31,376.88 L278.78,373.88 L279.25,373.47 L279.72,373.81 L280.19,375.16 L280.66,371.02 L281.12,369.80 L281.59,375.59 L282.06,367.95 L282.53,370.07 L283.00,372.97 L283.47,367.81 L283.94,367.17 L284.41,373.68 L284.88,372.33 L285.34,369.06 L285.81,366.01 L286.28,366.44 L286.75,369.32 L287.22,373.29 L287.69,371.02 L288.16,373.30 L288.62,371.39 L289.09,368.51 L289.56,362.46 L290.03,365.16 L290.34,362.09 L290.66,357.90 L290.97,359.60 L291.28,358.09 L291.59,355.39 L291.91,352.91 L292.22,354.22 L292.53,360.82 L292.84,353.38 L293.16,359.30 L293.62,362.22 L294.09,362.79 L294.56,363.04 L295.03,356.46 L295.50,357.34 L295.81,359.48 L296.12,361.38 L296.44,363.49 L296.75,368.81 L297.06,365.16 L297.38,374.23 L297.69,377.02 L298.00,390.19 L298.31,393.11 L298.62,400.31 L298.94,402.59 L299.25,405.14 L299.56,398.39 L299.88,407.96 L300.19,406.17 L300.50,407.16 L300.81,404.52 L301.12,404.09 L301.44,402.62 L301.75,402.27 L302.06,396.96 L302.38,398.68 L302.69,391.34 L303.00,394.46 L303.31,392.50 L303.62,396.05 L303.94,395.80 L304.25,399.08 L304.56,405.33 L304.88,402.27 L305.19,403.04 L305.50,391.25 L305.81,394.92 L306.12,389.55 L306.44,384.69 L306.75,381.33 L307.06,386.28 L307.38,386.46 L307.69,386.32 L308.00,392.50 L308.47,390.97 L308.94,393.29 L309.41,384.71 L309.88,388.74 L310.34,382.73 L310.81,385.25 L311.28,379.52 L311.75,387.83 L312.22,385.40 L312.69,384.69 L313.16,388.58 L313.62,385.49 L314.09,384.97 L314.56,379.85 L315.03,380.78 L315.34,383.74 L315.66,384.72 L315.97,383.56 L316.28,378.53 L316.59,378.83 L317.06,382.42 L317.53,380.23 L318.00,376.90 L318.47,376.95 L318.94,382.73 L319.41,376.95 L319.88,377.11 L320.34,375.51 L320.81,378.02 L321.28,376.88 L321.75,379.45 L322.22,378.07 L322.69,377.19 L323.16,380.07 L323.62,378.83 L324.09,375.13 L324.56,375.31 L325.03,376.95 L325.50,371.50 L325.97,371.02 L326.44,370.26 L326.91,380.85 L327.38,381.62 L327.84,380.50 L328.31,384.69 L328.78,380.93 L329.25,380.32 L329.72,378.71 L330.19,372.29 L330.66,372.97 L330.97,366.36 L331.28,367.44 L331.59,372.55 L331.91,364.38 L332.22,367.11 L332.53,364.72 L332.84,359.87 L333.16,358.07 L333.47,355.70 L333.78,357.34 L334.09,358.63 L334.41,358.40 L334.72,359.21 L335.03,362.45 L335.34,369.06 L335.66,367.39 L335.97,372.86 L336.28,370.11 L336.59,371.65 L336.91,378.83 L337.22,377.09 L337.53,375.48 L337.84,377.54 L338.16,369.23 L338.47,372.97 L338.94,372.69 L339.41,373.40 L339.88,370.14 L340.34,381.19 L340.81,376.88 L341.28,372.63 L341.75,370.09 L342.22,373.08 L342.69,368.52 L343.16,371.02 L343.62,373.14 L344.09,370.90 L344.56,369.25 L345.03,369.24 L345.50,374.92 L345.97,377.02 L346.44,371.68 L346.91,376.90 L347.38,372.98 L347.84,372.97 L348.31,378.88 L348.78,373.13 L349.25,373.75 L349.72,375.09 L350.19,378.83 L350.66,381.10 L351.12,377.90 L351.59,373.61 L352.06,369.70 L352.53,372.97 L353.00,375.74 L353.47,379.66 L353.94,376.32 L354.41,370.66 L354.88,376.88 L355.34,370.57 L355.81,370.05 L356.28,369.75 L356.75,367.12 L357.22,371.02 L357.69,366.92 L358.16,374.27 L358.62,377.74 L359.09,370.87 L359.56,374.92 L360.03,379.71 L360.50,373.89 L360.97,377.07 L361.44,377.92 L361.91,372.97 L362.38,376.61 L362.84,365.53 L363.31,367.32 L363.78,369.45 L364.25,367.11 L364.72,373.56 L365.19,365.73 L365.66,369.54 L366.12,377.19 L366.59,374.92 L367.06,369.14 L367.53,370.59 L368.00,368.42 L368.47,370.64 L368.94,367.11 L369.41,374.14 L369.88,368.24 L370.34,376.76 L370.81,379.04 L371.28,378.83 L371.59,380.94 L371.91,376.29 L372.22,378.77 L372.53,371.08 L372.84,371.02 L373.16,366.57 L373.47,361.02 L373.78,363.53 L374.09,356.74 L374.41,353.44 L374.88,349.74 L375.34,347.48 L375.81,352.34 L376.28,349.91 L376.75,347.58 L377.22,349.49 L377.69,345.56 L378.16,346.27 L378.62,342.23 L379.09,345.62 L379.56,348.32 L380.03,341.19 L380.50,346.44 L380.97,350.01 L381.44,347.58 L381.91,349.91 L382.38,343.95 L382.84,345.88 L383.31,352.90 L383.78,349.53 L384.09,351.87 L384.41,355.23 L384.72,355.95 L385.03,352.11 L385.34,353.44 L385.66,358.56 L385.97,357.55 L386.28,353.96 L386.59,355.14 L386.91,357.34 L387.22,354.62 L387.53,360.15 L387.84,368.19 L388.16,360.84 L388.47,367.11 L388.78,366.30 L389.09,359.72 L389.41,357.84 L389.72,362.49 L390.03,359.30 L390.34,356.07 L390.66,353.58 L390.97,354.33 L391.28,359.32 L391.59,357.34" fill="none" stroke="#1a5473" stroke-width="2" stroke-linejoin="round"/>
<path d="M857.40,205.7 A51.4,51.4 0 0 1 957.16,188.29 L937.50,195.37 A30.5,30.5 0 0 0 878.30,205.7 Z" fill="#ebe300"/>
<path d="M957.16,188.29 A51.4,51.4 0 0 1 960.20,205.7 L939.30,205.7 A30.5,30.5 0 0 0 937.50,195.37 Z" fill="#ebebeb" stroke="#cccccc" stroke-width="0.6"/>
<path d="M455.60,406.7 A51.4,51.4 0 0 1 548.58,376.49 L531.68,388.77 A30.5,30.5 0 0 0 476.50,406.7 Z" fill="#ebe300"/>
<path d="M548.58,376.49 A51.4,51.4 0 0 1 558.40,406.7 L537.50,406.7 A30.5,30.5 0 0 0 531.68,388.77 Z" fill="#ebebeb" stroke="#cccccc" stroke-width="0.6"/>
<path d="M656.50,406.7 A51.4,51.4 0 0 1 752.14,380.54 L734.15,391.17 A30.5,30.5 0 0 0 677.40,406.7 Z" fill="#ebe300"/>
<path d="M752.14,380.54 A51.4,51.4 0 0 1 759.30,406.7 L738.40,406.7 A30.5,30.5 0 0 0 734.15,391.17 Z" fill="#ebebeb" stroke="#cccccc" stroke-width="0.6"/>
<path d="M857.40,406.7 A51.4,51.4 0 0 1 913.64,355.53 L911.67,376.34 A30.5,30.5 0 0 0 878.30,406.7 Z" fill="#358a64"/>
<path d="M913.64,355.53 A51.4,51.4 0 0 1 960.20,406.7 L939.30,406.7 A30.5,30.5 0 0 0 911.67,376.34 Z" fill="#ebebeb" stroke="#cccccc" stroke-width="0.6"/>
<circle cx="540.4" cy="20.2" r="4.5" fill="#f2f2f2"/>
<text x="22.3" y="98.6" font-family='"Liberation Sans", sans-serif' font-size="12" fill="#4e5962" font-weight="normal" font-style="normal" text-anchor="start" textLength="55.3" lengthAdjust="spacingAndGlyphs" >Air Quality</text>
<text x="21.2" y="111.6" font-family='"Liberation Serif", serif' font-size="9.6" fill="#555" font-weight="normal" font-style="italic" text-anchor="start" textLength="104" lengthAdjust="spacingAndGlyphs" >Dr. Nathan Parker-N5PKR</text>
<text x="424.1" y="98.6" font-family='"Liberation Sans", sans-serif' font-size="12" fill="#4e5962" font-weight="normal" font-style="normal" text-anchor="start" textLength="86.8" lengthAdjust="spacingAndGlyphs" >Air Quality Index</text>
<text x="423.0" y="111.6" font-family='"Liberation Serif", serif' font-size="9.6" fill="#555" font-weight="normal" font-style="italic" text-anchor="start" textLength="104" lengthAdjust="spacingAndGlyphs" >Dr. Nathan Parker-N5PKR</text>
<text x="825.9" y="98.6" font-family='"Liberation Sans", sans-serif' font-size="12" fill="#4e5962" font-weight="normal" font-style="normal" text-anchor="start" textLength="62" lengthAdjust="spacingAndGlyphs" >Current AQI</text>
<text x="824.8000000000001" y="111.6" font-family='"Liberation Serif", serif' font-size="9.6" fill="#555" font-weight="normal" font-style="italic" text-anchor="start" textLength="104" lengthAdjust="spacingAndGlyphs" >Dr. Nathan Parker-N5PKR</text>
<text x="22.3" y="299.6" font-family='"Liberation Sans", sans-serif' font-size="12" fill="#4e5962" font-weight="normal" font-style="normal" text-anchor="start" textLength="119" lengthAdjust="spacingAndGlyphs" >7 Day Air Quality Index</text>
<text x="21.2" y="312.6" font-family='"Liberation Serif", serif' font-size="9.6" fill="#555" font-weight="normal" font-style="italic" text-anchor="start" textLength="104" lengthAdjust="spacingAndGlyphs" >Dr. Nathan Parker-N5PKR</text>
<text x="424.1" y="299.6" font-family='"Liberation Sans", sans-serif' font-size="12" fill="#4e5962" font-weight="normal" font-style="normal" text-anchor="start" textLength="57.8" lengthAdjust="spacingAndGlyphs" >1 Hour AQI</text>
<text x="423.0" y="312.6" font-family='"Liberation Serif", serif' font-size="9.6" fill="#555" font-weight="normal" font-style="italic" text-anchor="start" textLength="104" lengthAdjust="spacingAndGlyphs" >Dr. Nathan Parker-N5PKR</text>
<text x="625.0" y="299.6" font-family='"Liberation Sans", sans-serif' font-size="12" fill="#4e5962" font-weight="normal" font-style="normal" text-anchor="start" textLength="69.7" lengthAdjust="spacingAndGlyphs" >NowCast AQI</text>
<text x="623.9000000000001" y="312.6" font-family='"Liberation Serif", serif' font-size="9.6" fill="#555" font-weight="normal" font-style="italic" text-anchor="start" textLength="104" lengthAdjust="spacingAndGlyphs" >Dr. Nathan Parker-N5PKR</text>
<text x="825.9" y="299.6" font-family='"Liberation Sans", sans-serif' font-size="12" fill="#4e5962" font-weight="normal" font-style="normal" text-anchor="start" textLength="48.5" lengthAdjust="spacingAndGlyphs" >Humidity</text>
<text x="824.8000000000001" y="312.6" font-family='"Liberation Serif", serif' font-size="9.6" fill="#555" font-weight="normal" font-style="italic" text-anchor="start" textLength="104" lengthAdjust="spacingAndGlyphs" >Dr. Nathan Parker-N5PKR</text>
<text x="53.3" y="134.8" font-family='"Liberation Sans", sans-serif' font-size="9.8" fill="#666" font-weight="normal" font-style="normal" text-anchor="end" >100</text>
<text x="53.3" y="183.95" font-family='"Liberation Sans", sans-serif' font-size="9.8" fill="#666" font-weight="normal" font-style="normal" text-anchor="end" >50</text>
<text x="53.3" y="233.1" font-family='"Liberation Sans", sans-serif' font-size="9.8" fill="#666" font-weight="normal" font-style="normal" text-anchor="end" >0</text>
<text x="112.05" y="137.4" font-family='"Liberation Serif", serif' font-size="10" fill="#333" font-weight="normal" font-style="normal" text-anchor="middle" >89</text>
<text x="205.55" y="146.3" font-family='"Liberation Serif", serif' font-size="10" fill="#333" font-weight="normal" font-style="normal" text-anchor="middle" >80</text>
<text x="299.15" y="143.8" font-family='"Liberation Serif", serif' font-size="10" fill="#333" font-weight="normal" font-style="normal" text-anchor="middle" >83</text>
<text x="81.9" y="244.5" font-family='"Liberation Sans", sans-serif' font-size="9.6" fill="#666" font-weight="normal" font-style="normal" text-anchor="start" textLength="49.8" lengthAdjust="spacingAndGlyphs" >Current AQI</text>
<text x="176.5" y="244.5" font-family='"Liberation Sans", sans-serif' font-size="9.6" fill="#666" font-weight="normal" font-style="normal" text-anchor="start" textLength="47" lengthAdjust="spacingAndGlyphs" >1 Hour AQI</text>
<text x="274.5" y="244.5" font-family='"Liberation Sans", sans-serif' font-size="9.6" fill="#666" font-weight="normal" font-style="normal" text-anchor="start" textLength="40" lengthAdjust="spacingAndGlyphs" >NowCast</text>
<text x="142" y="244.5" font-family='"Liberation Sans", sans-serif' font-size="8.5" fill="#fff" font-weight="bold" font-style="normal" text-anchor="middle" >?</text>
<text x="233.5" y="244.5" font-family='"Liberation Sans", sans-serif' font-size="8.5" fill="#fff" font-weight="bold" font-style="normal" text-anchor="middle" >?</text>
<text x="322" y="244.5" font-family='"Liberation Sans", sans-serif' font-size="8.5" fill="#fff" font-weight="bold" font-style="normal" text-anchor="middle" >?</text>
<text x="24.5" y="267.7" font-family='"Liberation Serif", serif' font-size="10" fill="#555" font-weight="normal" font-style="italic" text-anchor="start" textLength="93" lengthAdjust="spacingAndGlyphs" stroke="#555" stroke-width="0.2">Index: United States EPA</text>
<text x="366.90000000000003" y="267.7" font-family='"Liberation Serif", serif' font-size="10" fill="#555" font-weight="normal" font-style="italic" text-anchor="end" textLength="130" lengthAdjust="spacingAndGlyphs" stroke="#555" stroke-width="0.2">Based on PM 2.5 calculations only</text>
<text x="426.3" y="267.7" font-family='"Liberation Serif", serif' font-size="10" fill="#555" font-weight="normal" font-style="italic" text-anchor="start" textLength="93" lengthAdjust="spacingAndGlyphs" stroke="#555" stroke-width="0.2">Index: United States EPA</text>
<text x="768.7" y="267.7" font-family='"Liberation Serif", serif' font-size="10" fill="#555" font-weight="normal" font-style="italic" text-anchor="end" textLength="130" lengthAdjust="spacingAndGlyphs" stroke="#555" stroke-width="0.2">Based on PM 2.5 calculations only</text>
<text x="24.5" y="468.7" font-family='"Liberation Serif", serif' font-size="10" fill="#555" font-weight="normal" font-style="italic" text-anchor="start" textLength="93" lengthAdjust="spacingAndGlyphs" stroke="#555" stroke-width="0.2">Index: United States EPA</text>
<text x="366.90000000000003" y="468.7" font-family='"Liberation Serif", serif' font-size="10" fill="#555" font-weight="normal" font-style="italic" text-anchor="end" textLength="130" lengthAdjust="spacingAndGlyphs" stroke="#555" stroke-width="0.2">Based on PM 2.5 calculations only</text>
<text x="827.6" y="254.9" font-family='"Liberation Serif", serif' font-size="10" fill="#555" font-weight="normal" font-style="italic" text-anchor="start" textLength="93.7" lengthAdjust="spacingAndGlyphs" stroke="#555" stroke-width="0.2">Index: United States EPA</text>
<text x="827.6" y="269.2" font-family='"Liberation Serif", serif' font-size="10" fill="#555" font-weight="normal" font-style="italic" text-anchor="start" textLength="130" lengthAdjust="spacingAndGlyphs" stroke="#555" stroke-width="0.2">Based on PM 2.5 calculations only</text>
<text x="425.8" y="455.9" font-family='"Liberation Serif", serif' font-size="10" fill="#555" font-weight="normal" font-style="italic" text-anchor="start" textLength="93.7" lengthAdjust="spacingAndGlyphs" stroke="#555" stroke-width="0.2">Index: United States EPA</text>
<text x="425.8" y="470.2" font-family='"Liberation Serif", serif' font-size="10" fill="#555" font-weight="normal" font-style="italic" text-anchor="start" textLength="130" lengthAdjust="spacingAndGlyphs" stroke="#555" stroke-width="0.2">Based on PM 2.5 calculations only</text>
<text x="626.7" y="455.9" font-family='"Liberation Serif", serif' font-size="10" fill="#555" font-weight="normal" font-style="italic" text-anchor="start" textLength="93.7" lengthAdjust="spacingAndGlyphs" stroke="#555" stroke-width="0.2">Index: United States EPA</text>
<text x="626.7" y="470.2" font-family='"Liberation Serif", serif' font-size="10" fill="#555" font-weight="normal" font-style="italic" text-anchor="start" textLength="130" lengthAdjust="spacingAndGlyphs" stroke="#555" stroke-width="0.2">Based on PM 2.5 calculations only</text>
<text x="435.6" y="141.8" font-family='"Liberation Sans", sans-serif' font-size="9.8" fill="#666" font-weight="normal" font-style="normal" text-anchor="end" >105</text>
<text x="435.6" y="153.20000000000002" font-family='"Liberation Sans", sans-serif' font-size="9.8" fill="#666" font-weight="normal" font-style="normal" text-anchor="end" >100</text>
<text x="435.6" y="164.60000000000002" font-family='"Liberation Sans", sans-serif' font-size="9.8" fill="#666" font-weight="normal" font-style="normal" text-anchor="end" >95</text>
<text x="435.6" y="176.0" font-family='"Liberation Sans", sans-serif' font-size="9.8" fill="#666" font-weight="normal" font-style="normal" text-anchor="end" >90</text>
<text x="435.6" y="187.4" font-family='"Liberation Sans", sans-serif' font-size="9.8" fill="#666" font-weight="normal" font-style="normal" text-anchor="end" >85</text>
<text x="435.6" y="198.8" font-family='"Liberation Sans", sans-serif' font-size="9.8" fill="#666" font-weight="normal" font-style="normal" text-anchor="end" >80</text>
<text x="435.6" y="210.2" font-family='"Liberation Sans", sans-serif' font-size="9.8" fill="#666" font-weight="normal" font-style="normal" text-anchor="end" >75</text>
<text x="435.6" y="221.6" font-family='"Liberation Sans", sans-serif' font-size="9.8" fill="#666" font-weight="normal" font-style="normal" text-anchor="end" >70</text>
<text x="435.6" y="233.0" font-family='"Liberation Sans", sans-serif' font-size="9.8" fill="#666" font-weight="normal" font-style="normal" text-anchor="end" >65</text>
<text x="483.8" y="243.3" font-family='"Liberation Sans", sans-serif' font-size="9.8" fill="#666" font-weight="normal" font-style="normal" text-anchor="end" transform="rotate(-45 483.80 243.3)">10 AM</text>
<text x="540.86" y="243.3" font-family='"Liberation Sans", sans-serif' font-size="9.8" fill="#666" font-weight="normal" font-style="normal" text-anchor="end" transform="rotate(-45 540.86 243.3)">11 AM</text>
<text x="597.9200000000001" y="243.3" font-family='"Liberation Sans", sans-serif' font-size="9.8" fill="#666" font-weight="normal" font-style="normal" text-anchor="end" transform="rotate(-45 597.92 243.3)">12 PM</text>
<text x="654.98" y="243.3" font-family='"Liberation Sans", sans-serif' font-size="9.8" fill="#666" font-weight="normal" font-style="normal" text-anchor="end" transform="rotate(-45 654.98 243.3)">1 PM</text>
<text x="712.04" y="243.3" font-family='"Liberation Sans", sans-serif' font-size="9.8" fill="#666" font-weight="normal" font-style="normal" text-anchor="end" transform="rotate(-45 712.04 243.3)">2 PM</text>
<text x="769.1" y="243.3" font-family='"Liberation Sans", sans-serif' font-size="9.8" fill="#666" font-weight="normal" font-style="normal" text-anchor="end" transform="rotate(-45 769.10 243.3)">3 PM</text>
<text x="34" y="343.3" font-family='"Liberation Sans", sans-serif' font-size="9.8" fill="#666" font-weight="normal" font-style="normal" text-anchor="end" >104</text>
<text x="34" y="354.625" font-family='"Liberation Sans", sans-serif' font-size="9.8" fill="#666" font-weight="normal" font-style="normal" text-anchor="end" >91</text>
<text x="34" y="365.95" font-family='"Liberation Sans", sans-serif' font-size="9.8" fill="#666" font-weight="normal" font-style="normal" text-anchor="end" >78</text>
<text x="34" y="377.275" font-family='"Liberation Sans", sans-serif' font-size="9.8" fill="#666" font-weight="normal" font-style="normal" text-anchor="end" >65</text>
<text x="34" y="388.6" font-family='"Liberation Sans", sans-serif' font-size="9.8" fill="#666" font-weight="normal" font-style="normal" text-anchor="end" >52</text>
<text x="34" y="399.925" font-family='"Liberation Sans", sans-serif' font-size="9.8" fill="#666" font-weight="normal" font-style="normal" text-anchor="end" >39</text>
<text x="34" y="411.25" font-family='"Liberation Sans", sans-serif' font-size="9.8" fill="#666" font-weight="normal" font-style="normal" text-anchor="end" >26</text>
<text x="34" y="422.575" font-family='"Liberation Sans", sans-serif' font-size="9.8" fill="#666" font-weight="normal" font-style="normal" text-anchor="end" >13</text>
<text x="34" y="433.9" font-family='"Liberation Sans", sans-serif' font-size="9.8" fill="#666" font-weight="normal" font-style="normal" text-anchor="end" >0</text>
<text x="60.8" y="443.5" font-family='"Liberation Sans", sans-serif' font-size="9.8" fill="#666" font-weight="normal" font-style="normal" text-anchor="end" textLength="29.5" lengthAdjust="spacingAndGlyphs" transform="rotate(-45 60.80 443.5)">07/26</text>
<text x="104.27" y="443.5" font-family='"Liberation Sans", sans-serif' font-size="9.8" fill="#666" font-weight="normal" font-style="normal" text-anchor="end" textLength="29.5" lengthAdjust="spacingAndGlyphs" transform="rotate(-45 104.27 443.5)">07/27</text>
<text x="147.74" y="443.5" font-family='"Liberation Sans", sans-serif' font-size="9.8" fill="#666" font-weight="normal" font-style="normal" text-anchor="end" textLength="29.5" lengthAdjust="spacingAndGlyphs" transform="rotate(-45 147.74 443.5)">07/28</text>
<text x="191.21" y="443.5" font-family='"Liberation Sans", sans-serif' font-size="9.8" fill="#666" font-weight="normal" font-style="normal" text-anchor="end" textLength="29.5" lengthAdjust="spacingAndGlyphs" transform="rotate(-45 191.21 443.5)">07/29</text>
<text x="234.68" y="443.5" font-family='"Liberation Sans", sans-serif' font-size="9.8" fill="#666" font-weight="normal" font-style="normal" text-anchor="end" textLength="29.5" lengthAdjust="spacingAndGlyphs" transform="rotate(-45 234.68 443.5)">07/30</text>
<text x="278.15000000000003" y="443.5" font-family='"Liberation Sans", sans-serif' font-size="9.8" fill="#666" font-weight="normal" font-style="normal" text-anchor="end" textLength="29.5" lengthAdjust="spacingAndGlyphs" transform="rotate(-45 278.15 443.5)">07/31</text>
<text x="321.62" y="443.5" font-family='"Liberation Sans", sans-serif' font-size="9.8" fill="#666" font-weight="normal" font-style="normal" text-anchor="end" textLength="29.5" lengthAdjust="spacingAndGlyphs" transform="rotate(-45 321.62 443.5)">08/01</text>
<text x="365.09" y="443.5" font-family='"Liberation Sans", sans-serif' font-size="9.8" fill="#666" font-weight="normal" font-style="normal" text-anchor="end" textLength="29.5" lengthAdjust="spacingAndGlyphs" transform="rotate(-45 365.09 443.5)">08/02</text>
<text x="908.8000000000001" y="207.7" font-family='"Liberation Serif", serif' font-size="19" fill="#333c46" font-weight="normal" font-style="normal" text-anchor="middle" >89</text>
<text x="908.8000000000001" y="223.29999999999998" font-family='"Liberation Serif", serif' font-size="12" fill="#333c46" font-weight="normal" font-style="normal" text-anchor="middle" textLength="44" lengthAdjust="spacingAndGlyphs" >Moderate</text>
<text x="868.3000000000001" y="218.0" font-family='"Liberation Serif", serif' font-size="10" fill="#555" font-weight="normal" font-style="normal" text-anchor="middle" >0</text>
<text x="507.0" y="408.7" font-family='"Liberation Serif", serif' font-size="19" fill="#333c46" font-weight="normal" font-style="normal" text-anchor="middle" >80</text>
<text x="507.0" y="424.3" font-family='"Liberation Serif", serif' font-size="12" fill="#333c46" font-weight="normal" font-style="normal" text-anchor="middle" textLength="44" lengthAdjust="spacingAndGlyphs" >Moderate</text>
<text x="466.5" y="419.0" font-family='"Liberation Serif", serif' font-size="10" fill="#555" font-weight="normal" font-style="normal" text-anchor="middle" >0</text>
<text x="707.9000000000001" y="408.7" font-family='"Liberation Serif", serif' font-size="19" fill="#333c46" font-weight="normal" font-style="normal" text-anchor="middle" >83</text>
<text x="707.9000000000001" y="424.3" font-family='"Liberation Serif", serif' font-size="12" fill="#333c46" font-weight="normal" font-style="normal" text-anchor="middle" textLength="44" lengthAdjust="spacingAndGlyphs" >Moderate</text>
<text x="667.4000000000001" y="419.0" font-family='"Liberation Serif", serif' font-size="10" fill="#555" font-weight="normal" font-style="normal" text-anchor="middle" >0</text>
<text x="908.8000000000001" y="410.8" font-family='"Liberation Serif", serif' font-size="19.5" fill="#333c46" font-weight="normal" font-style="normal" text-anchor="middle" >53</text>
<text x="908.8000000000001" y="425.2" font-family='"Liberation Serif", serif' font-size="11" fill="#333c46" font-weight="normal" font-style="normal" text-anchor="middle" >%</text>
<text x="868.3000000000001" y="419.0" font-family='"Liberation Serif", serif' font-size="10" fill="#555" font-weight="normal" font-style="normal" text-anchor="middle" >0</text>
<text x="34.7" y="26.7" font-family='"Liberation Sans", sans-serif' font-size="16.3" fill="#eef0f2" font-weight="bold" font-style="normal" text-anchor="start" textLength="70" lengthAdjust="spacingAndGlyphs" >WEATHERLINK</text>
<text x="163" y="24.8" font-family='"Liberation Serif", serif' font-size="14" fill="#e9ecee" font-weight="normal" font-style="normal" text-anchor="start" textLength="42" lengthAdjust="spacingAndGlyphs" stroke="#e9ecee" stroke-width="0.15">bulletin</text>
<text x="229" y="24.8" font-family='"Liberation Serif", serif' font-size="14" fill="#e9ecee" font-weight="normal" font-style="normal" text-anchor="start" textLength="28.4" lengthAdjust="spacingAndGlyphs" stroke="#e9ecee" stroke-width="0.15">chart</text>
<text x="281.3" y="24.8" font-family='"Liberation Serif", serif' font-size="14" fill="#e9ecee" font-weight="normal" font-style="normal" text-anchor="start" textLength="23.6" lengthAdjust="spacingAndGlyphs" stroke="#e9ecee" stroke-width="0.15">data</text>
<text x="329" y="24.8" font-family='"Liberation Serif", serif' font-size="14" fill="#e9ecee" font-weight="normal" font-style="normal" text-anchor="start" textLength="23.6" lengthAdjust="spacingAndGlyphs" stroke="#e9ecee" stroke-width="0.15">map</text>
<text x="376.8" y="24.8" font-family='"Liberation Serif", serif' font-size="14" fill="#e9ecee" font-weight="normal" font-style="normal" text-anchor="start" textLength="46.9" lengthAdjust="spacingAndGlyphs" stroke="#e9ecee" stroke-width="0.15">mobilize</text>
<text x="540.4" y="23.2" font-family='"Liberation Sans", sans-serif' font-size="7.5" fill="#3d484e" font-weight="bold" font-style="normal" text-anchor="middle" >?</text>
<text x="551" y="24.3" font-family='"Liberation Sans", sans-serif' font-size="10.5" fill="#f2f2f2" font-weight="bold" font-style="normal" text-anchor="start" textLength="59.5" lengthAdjust="spacingAndGlyphs" >What's New?</text>
<text x="664" y="24.1" font-family='"Liberation Sans", sans-serif' font-size="10.5" fill="#ffffff" font-weight="bold" font-style="normal" text-anchor="start" textLength="56.5" lengthAdjust="spacingAndGlyphs" >Add Devices</text>
<text x="772.2" y="23.8" font-family='"Liberation Serif", serif' font-size="12" fill="#8c8c8c" font-weight="normal" font-style="normal" text-anchor="start" textLength="122.3" lengthAdjust="spacingAndGlyphs" >Search locations &amp; stations</text>
<text x="332.3" y="61" font-family='"Liberation Sans", sans-serif' font-size="11.5" fill="#515a62" font-weight="normal" font-style="normal" text-anchor="start" textLength="86" lengthAdjust="spacingAndGlyphs" >Current station:</text>
<text x="420.8" y="61" font-family='"Liberation Sans", sans-serif' font-size="11.5" fill="#414b53" font-weight="bold" font-style="normal" text-anchor="start" textLength="142.8" lengthAdjust="spacingAndGlyphs" >Dr. Nathan Parker-N5PKR</text>
<text x="583.2" y="61" font-family='"Liberation Sans", sans-serif' font-size="11.5" fill="#515a62" font-weight="normal" font-style="normal" text-anchor="start" textLength="63" lengthAdjust="spacingAndGlyphs" >Device Tier:</text>
<text x="648.4" y="61" font-family='"Liberation Sans", sans-serif' font-size="11.5" fill="#414b53" font-weight="bold" font-style="normal" text-anchor="start" textLength="25" lengthAdjust="spacingAndGlyphs" >Pro+</text>
<text x="842" y="61.5" font-family='"Liberation Sans", sans-serif' font-size="12" fill="#414b53" font-weight="bold" font-style="normal" text-anchor="start" textLength="30.3" lengthAdjust="spacingAndGlyphs" >Saved</text>
<text x="928" y="61.5" font-family='"Liberation Sans", sans-serif' font-size="12" fill="#414b53" font-weight="bold" font-style="normal" text-anchor="start" textLength="84.3" lengthAdjust="spacingAndGlyphs" >Share &amp; Uploads</text>
</svg>
</body></html>
